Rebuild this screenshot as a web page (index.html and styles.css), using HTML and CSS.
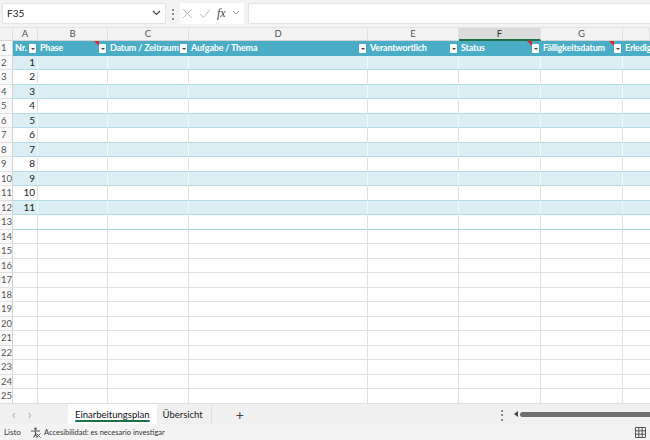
FILE: index.html
```
<!DOCTYPE html>
<html>
<head>
<meta charset="utf-8">
<link rel="stylesheet" href="styles.css">
</head>
<body>
<div class="app">
  <div class="fbar">
    <div class="namebox"><span>F35</span><svg class="chev" width="9" height="6" viewBox="0 0 9 6"><path d="M1 1l3.5 3.5L8 1" fill="none" stroke="#444" stroke-width="1.2"/></svg></div>
    <div class="dots">⋮</div>
    <div class="fbtns">
      <svg width="11" height="11" viewBox="0 0 11 11"><path d="M1 1l9 9M10 1l-9 9" stroke="#bbb" stroke-width="1"/></svg>
      <svg width="12" height="11" viewBox="0 0 12 11"><path d="M1 6l3.5 3.5L11 1.5" fill="none" stroke="#bbb" stroke-width="1"/></svg>
      <span class="fx">fx</span>
      <svg width="8" height="6" viewBox="0 0 8 6"><path d="M1 1l3 3 3-3" fill="none" stroke="#999" stroke-width="1"/></svg>
    </div>
    <div class="finput"></div>
  </div>
  <div class="sheet" id="sheet">
    <div class="row colhead">
      <div class="c rh corner"></div>
      <div class="c">A</div><div class="c">B</div><div class="c">C</div><div class="c">D</div><div class="c">E</div><div class="c sel">F</div><div class="c">G</div><div class="c last"></div>
    </div>
    <div class="row thead">
      <div class="c rh">1</div>
      <div class="c"><span>Nr.</span><i class="dd"></i></div>
      <div class="c"><span>Phase</span><b class="note"></b><i class="dd"></i></div>
      <div class="c"><span>Datum / Zeitraum</span><i class="dd"></i></div>
      <div class="c"><span>Aufgabe / Thema</span><i class="dd"></i></div>
      <div class="c"><span>Verantwortlich</span><i class="dd"></i></div>
      <div class="c"><span>Status</span><b class="note"></b><i class="dd"></i></div>
      <div class="c"><span>Fälligkeitsdatum</span><b class="note"></b><i class="dd"></i></div>
      <div class="c last"><span>Erledig</span></div>
    </div>
    <div class="row band"><div class="c rh">2</div><div class="c num">1</div><div class="c"></div><div class="c"></div><div class="c"></div><div class="c"></div><div class="c"></div><div class="c"></div><div class="c last"></div></div>
    <div class="row tw"><div class="c rh">3</div><div class="c num">2</div><div class="c"></div><div class="c"></div><div class="c"></div><div class="c"></div><div class="c"></div><div class="c"></div><div class="c last"></div></div>
    <div class="row band"><div class="c rh">4</div><div class="c num">3</div><div class="c"></div><div class="c"></div><div class="c"></div><div class="c"></div><div class="c"></div><div class="c"></div><div class="c last"></div></div>
    <div class="row tw"><div class="c rh">5</div><div class="c num">4</div><div class="c"></div><div class="c"></div><div class="c"></div><div class="c"></div><div class="c"></div><div class="c"></div><div class="c last"></div></div>
    <div class="row band"><div class="c rh">6</div><div class="c num">5</div><div class="c"></div><div class="c"></div><div class="c"></div><div class="c"></div><div class="c"></div><div class="c"></div><div class="c last"></div></div>
    <div class="row tw"><div class="c rh">7</div><div class="c num">6</div><div class="c"></div><div class="c"></div><div class="c"></div><div class="c"></div><div class="c"></div><div class="c"></div><div class="c last"></div></div>
    <div class="row band"><div class="c rh">8</div><div class="c num">7</div><div class="c"></div><div class="c"></div><div class="c"></div><div class="c"></div><div class="c"></div><div class="c"></div><div class="c last"></div></div>
    <div class="row tw"><div class="c rh">9</div><div class="c num">8</div><div class="c"></div><div class="c"></div><div class="c"></div><div class="c"></div><div class="c"></div><div class="c"></div><div class="c last"></div></div>
    <div class="row band"><div class="c rh">10</div><div class="c num">9</div><div class="c"></div><div class="c"></div><div class="c"></div><div class="c"></div><div class="c"></div><div class="c"></div><div class="c last"></div></div>
    <div class="row tw"><div class="c rh">11</div><div class="c num">10</div><div class="c"></div><div class="c"></div><div class="c"></div><div class="c"></div><div class="c"></div><div class="c"></div><div class="c last"></div></div>
    <div class="row band"><div class="c rh">12</div><div class="c num">11</div><div class="c"></div><div class="c"></div><div class="c"></div><div class="c"></div><div class="c"></div><div class="c"></div><div class="c last"></div></div>
    <div class="row tline"><div class="c rh">13</div><div class="c"></div><div class="c"></div><div class="c"></div><div class="c"></div><div class="c"></div><div class="c"></div><div class="c"></div><div class="c last"></div></div>
    <div class="row"><div class="c rh">14</div><div class="c"></div><div class="c"></div><div class="c"></div><div class="c"></div><div class="c"></div><div class="c"></div><div class="c"></div><div class="c last"></div></div>
    <div class="row"><div class="c rh">15</div><div class="c"></div><div class="c"></div><div class="c"></div><div class="c"></div><div class="c"></div><div class="c"></div><div class="c"></div><div class="c last"></div></div>
    <div class="row"><div class="c rh">16</div><div class="c"></div><div class="c"></div><div class="c"></div><div class="c"></div><div class="c"></div><div class="c"></div><div class="c"></div><div class="c last"></div></div>
    <div class="row"><div class="c rh">17</div><div class="c"></div><div class="c"></div><div class="c"></div><div class="c"></div><div class="c"></div><div class="c"></div><div class="c"></div><div class="c last"></div></div>
    <div class="row"><div class="c rh">18</div><div class="c"></div><div class="c"></div><div class="c"></div><div class="c"></div><div class="c"></div><div class="c"></div><div class="c"></div><div class="c last"></div></div>
    <div class="row"><div class="c rh">19</div><div class="c"></div><div class="c"></div><div class="c"></div><div class="c"></div><div class="c"></div><div class="c"></div><div class="c"></div><div class="c last"></div></div>
    <div class="row"><div class="c rh">20</div><div class="c"></div><div class="c"></div><div class="c"></div><div class="c"></div><div class="c"></div><div class="c"></div><div class="c"></div><div class="c last"></div></div>
    <div class="row"><div class="c rh">21</div><div class="c"></div><div class="c"></div><div class="c"></div><div class="c"></div><div class="c"></div><div class="c"></div><div class="c"></div><div class="c last"></div></div>
    <div class="row"><div class="c rh">22</div><div class="c"></div><div class="c"></div><div class="c"></div><div class="c"></div><div class="c"></div><div class="c"></div><div class="c"></div><div class="c last"></div></div>
    <div class="row"><div class="c rh">23</div><div class="c"></div><div class="c"></div><div class="c"></div><div class="c"></div><div class="c"></div><div class="c"></div><div class="c"></div><div class="c last"></div></div>
    <div class="row"><div class="c rh">24</div><div class="c"></div><div class="c"></div><div class="c"></div><div class="c"></div><div class="c"></div><div class="c"></div><div class="c"></div><div class="c last"></div></div>
    <div class="row"><div class="c rh">25</div><div class="c"></div><div class="c"></div><div class="c"></div><div class="c"></div><div class="c"></div><div class="c"></div><div class="c"></div><div class="c last"></div></div>
  </div>
  <div class="tabs">
    <div class="nav"><span>‹</span><span>›</span></div>
    <div class="tab active">Einarbeitungsplan</div>
    <div class="tab">Übersicht</div>
    <div class="plus">+</div>
    <div class="spacer"></div>
    <div class="vdots">⋮</div>
    <div class="hscroll"><i class="larr"></i><div class="thumb"></div></div>
  </div>
  <div class="status">
    <span class="listo">Listo</span>
    <svg class="acc" width="11" height="11" viewBox="0 0 11 11"><circle cx="5.5" cy="1.8" r="1.3" fill="#555"/><path d="M1 4h9M5.5 4v3.2M5.5 7.2L3.5 10.5M5.5 7.2l2 3.3" stroke="#555" stroke-width="1.1" fill="none"/><path d="M6.5 6.5l4 4M10.5 6.5l-4 4" stroke="#555" stroke-width="1"/></svg>
    <span class="acct">Accesibilidad: es necesario investigar</span>
    <span class="spacer"></span>
    <svg class="gridic" width="11" height="11" viewBox="0 0 11 11"><path d="M0.5 0.5h10v10h-10zM0.5 3.8h10M0.5 7.2h10M3.8 0.5v10M7.2 0.5v10" fill="none" stroke="#555" stroke-width="1"/></svg>
  </div>
</div>
</body>
</html>
```
FILE: styles.css
```
* { box-sizing: border-box; }
html, body { margin: 0; padding: 0; }
body { width: 650px; height: 440px; overflow: hidden; background: #fff; font-family: "Lato", "Open Sans", sans-serif; }
.app { display: flex; flex-direction: column; height: 440px; }

.fbar { height: 28px; flex-shrink: 0; background: #f3f3f3; display: flex; align-items: center; padding: 2px 0 3px 2px; border-bottom: 1px solid #e3e3e3; }
.namebox { width: 164px; height: 21px; background: #fff; border: 1px solid #e4e4e4; border-radius: 2px; display: flex; align-items: center; justify-content: space-between; padding: 0 4px 0 4px; font-size: 10px; color: #222; }
.dots { width: 14px; text-align: center; color: #555; font-size: 12px; }
.fbtns { display: flex; align-items: center; gap: 6px; height: 21px; padding: 0 4px 0 2px; background: #fff; border-radius: 2px; }
.fx { font-family: "Liberation Serif", serif; font-style: italic; font-size: 12px; color: #444; }
.finput { flex: 1; height: 21px; background: #fff; margin-left: 4px; border: 1px solid #e4e4e4; border-right: none; border-radius: 2px 0 0 2px; }

.sheet { flex: 1; display: flex; flex-direction: column; overflow: hidden; background: #fff; }
.row { display: grid; grid-template-columns: 13px 25px 70px 81px 179px 91px 82px 82px 1fr; height: 14.5px; flex-shrink: 0; }
.c { border-right: 1px solid #e1e1e1; border-bottom: 1px solid #e1e1e1; position: relative; font-size: 10px; line-height: 13px; color: #222; white-space: nowrap; overflow: hidden; }
.c.last { border-right: none; }
.rh { background: #fafafa; color: #555; font-size: 9.5px; padding-left: 1px; border-right: 1px solid #d4d4d4; }

.colhead { height: 13px; background: #f3f3f3; }
.colhead .c { background: #f3f3f3; text-align: center; color: #555; font-size: 9.5px; line-height: 12px; border-bottom: 1px solid #d4d4d4; border-right: 1px solid #e1e1e1; }
.colhead .c.sel { background: #dcdcdc; border-bottom: 2px solid #1e7145; color: #333; }

.thead .c { background: #4bacc6; color: #fff; font-weight: bold; border-right: none; border-bottom: 1px solid #4bacc6; padding-left: 2px; font-size: 9px; letter-spacing: -0.2px; line-height: 14px; }
.thead .c.rh { background: #fafafa; color: #555; font-weight: normal; font-size: 9.5px; letter-spacing: 0; border-right: 1px solid #d4d4d4; border-bottom: 1px solid #e1e1e1; padding-left: 1px; }
.dd { position: absolute; right: 2px; top: 3px; width: 7px; height: 9px; background: #fff; border-radius: 1px; }
.dd::after { content: ""; position: absolute; left: 1.5px; top: 3.5px; border-left: 2px solid transparent; border-right: 2px solid transparent; border-top: 2px solid #444; }
.note { position: absolute; right: 9px; top: 0; width: 0; height: 0; border-left: 5px solid transparent; border-top: 5px solid #e0262b; }

.band .c { background: #daeef3; border-bottom: 1px solid #b5dbe6; border-right-color: #eef7fa; }
.tw .c { border-bottom: 1px solid #b5dbe6; }
.band .c.rh, .tw .c.rh { background: #fafafa; border-right: 1px solid #d4d4d4; border-bottom: 1px solid #e1e1e1; }
.band .c.last { border-right: none; }
.tline .c { border-bottom: 1px solid #a9d3de; }
.tline .c.rh { border-bottom: 1px solid #e1e1e1; }
.num { text-align: right; padding-right: 2px; font-size: 10px; }

.tabs { height: 21px; flex-shrink: 0; background: #f0f0f0; display: flex; align-items: stretch; border-top: 1px solid #e0e0e0; font-size: 9.5px; color: #222; }
.nav { width: 68px; display: flex; gap: 12px; padding-left: 12px; align-items: center; color: #aaa; font-size: 13px; }
.tab { padding: 0 4px; display: flex; align-items: center; position: relative; }
.tab.active { background: #fff; color: #111; padding: 0 7px; }
.tab.active::after { content: ""; position: absolute; left: 7px; right: 7px; bottom: 2px; height: 2px; background: #1e7145; border-radius: 1px; }
.tab + .tab { border-right: 1px solid #e0e0e0; padding: 0 8px 0 6px; }
.plus { width: 56px; display: flex; align-items: center; justify-content: center; font-size: 14px; color: #444; }
.spacer { flex: 1; }
.vdots { width: 16px; display: flex; align-items: center; justify-content: center; color: #555; font-size: 12px; }
.hscroll { width: 140px; display: flex; align-items: center; padding-left: 4px; }
.larr { width: 0; height: 0; border-top: 3px solid transparent; border-bottom: 3px solid transparent; border-right: 4px solid #444; margin-right: 2px; }
.thumb { flex: 1; height: 5px; background: #6e6e6e; border-radius: 3px 0 0 3px; }

.status { height: 16px; flex-shrink: 0; background: #f3f3f3; display: flex; align-items: center; font-size: 7.5px; color: #333; padding-left: 4px; }
.listo { width: 26px; font-size: 8px; }
.acc { margin-right: 3px; }
.gridic { margin-right: 4px; }
```
